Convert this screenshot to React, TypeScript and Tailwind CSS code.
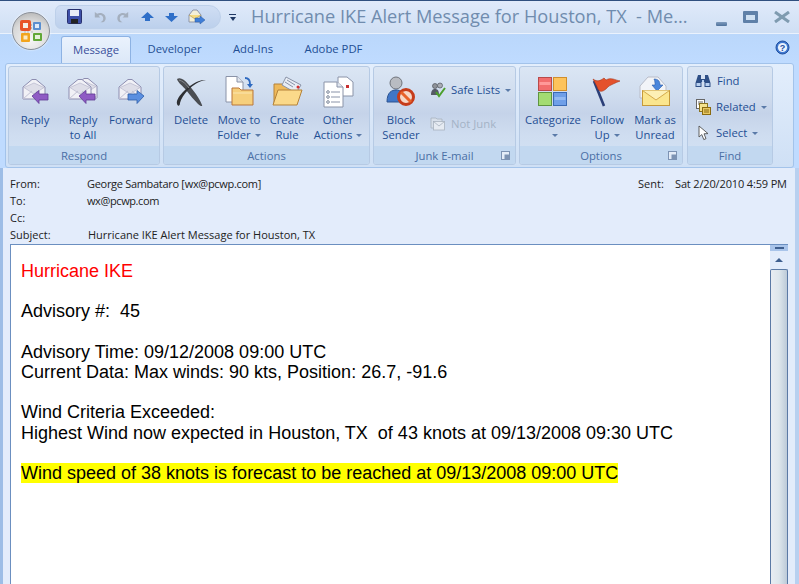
import React from "react";

const ui = { fontFamily: '"Open Sans", "Noto Sans", sans-serif' };

const Env = ({ x = 3, y = 2 }: { x?: number; y?: number }) => (
  <g transform={`translate(${x} ${y})`}>
    <path d="M1 9 L10 1.5 h4 L23 9 V21 H1 Z" fill="#f1f1f6" stroke="#8d8db0" />
    <path d="M2 9.5 L12 5 L22 9.5 L12 16 Z" fill="#dedee8" stroke="#b0b0c8" strokeWidth=".6" />
    <path d="M1 21 L10 13 M23 21 L14 13" stroke="#c2c2d4" fill="none" />
  </g>
);
const ArrowL = ({ c = "#8f5bc4", d = "#5f3b94" }: { c?: string; d?: string }) => (
  <path d="M13 20 L20 14.5 V18 H29 V24 H20 V27.5 Z" fill={c} stroke={d} strokeWidth=".8" />
);
const IconReply = () => (
  <svg width="32" height="32" viewBox="0 0 32 32"><Env /><ArrowL /></svg>
);
const IconReplyAll = () => (
  <svg width="32" height="32" viewBox="0 0 32 32">
    <g transform="translate(7 -1)"><Env x={0} y={2} /></g>
    <Env x={1} y={2} />
    <g transform="translate(-1 0)"><ArrowL /></g>
  </svg>
);
const IconForward = () => (
  <svg width="32" height="32" viewBox="0 0 32 32">
    <Env />
    <path d="M29 20 L22 14.5 V18 H13 V24 H22 V27.5 Z" fill="#5b8fe0" stroke="#2f5ea8" strokeWidth=".8" />
  </svg>
);
const IconDelete = () => (
  <svg width="32" height="32" viewBox="0 0 32 32">
    <path d="M2 3 C5 1 9 3 13 8 C18 14 24 21 27 29 C28 31 25 30 23 28 C19 24 15 19 11 14 C8 10 3 7 2 3 Z" fill="#4a4d52" />
    <path d="M31 4 C24 5 18 9 13 14 C9 18 6 23 5 27 C5 30 3 31 2 28 C1 24 5 19 9 15 C15 9 24 3 31 4 Z" fill="#2e3034" />
    <path d="M4 4 C8 5 11 8 14 12" stroke="#85888e" fill="none" />
  </svg>
);
const IconMove = () => (
  <svg width="32" height="32" viewBox="0 0 32 32" overflow="visible">
    <path d="M3 0.5 H14 L20 6 V26 H3 Z" fill="#fff" stroke="#8a93a8" />
    <path d="M14 0.5 V6 H20" fill="#dfe5ee" stroke="#8a93a8" />
    <path d="M22 2 C25 2 27 3 27 8" fill="none" stroke="#2f6ac0" strokeWidth="1.8" />
    <path d="M24 8 H30 L27 12 Z" fill="#2f6ac0" />
    <path d="M9 12 H16 L18 14 H30 V29 H9 Z" fill="#f6cf7c" stroke="#b9763a" />
    <path d="M10 17 H29" stroke="#fbe6b0" />
  </svg>
);
const IconRule = () => (
  <svg width="32" height="32" viewBox="0 0 32 32" overflow="visible">
    <path d="M3 8 H12 L14 10 H26 V28 H3 Z" fill="#eeb95a" stroke="#b58238" />
    <path d="M15 1 L30 9 L25 17 L11 9 Z" fill="#e8edf5" stroke="#8a93a8" />
    <circle cx="27" cy="11" r="1.5" fill="#d83030" />
    <path d="M16 4 L24 9 M14 6 L22 11" stroke="#8a93a8" />
    <path d="M7 14 H31 L26 29 H2 Z" fill="#fbd98a" stroke="#b58238" />
  </svg>
);
const IconOther = () => (
  <svg width="32" height="32" viewBox="0 0 32 32">
    <path d="M16 1 H25 L31 6 V20 H16 Z" fill="#fff" stroke="#8a93a8" />
    <rect x="24" y="9" width="3" height="3" fill="#c83030" />
    <path d="M2 6 H15 L21 11 V31 H2 Z" fill="#fff" stroke="#8a93a8" />
    <path d="M15 6 V11 H21" fill="#dfe5ee" stroke="#8a93a8" />
    <circle cx="6" cy="16" r="1.3" fill="none" stroke="#7a8598" />
    <circle cx="6" cy="21" r="1.3" fill="none" stroke="#7a8598" />
    <circle cx="6" cy="26" r="1.3" fill="none" stroke="#7a8598" />
    <path d="M9 16 H18 M9 21 H18 M9 26 H18" stroke="#8a93a8" />
  </svg>
);
const IconBlock = () => (
  <svg width="32" height="32" viewBox="0 0 32 32">
    <circle cx="11" cy="7" r="6" fill="#b9bcc2" stroke="#70747c" />
    <path d="M2 26 C2 16 7 14 11 14 C16 14 20 17 20 26 Z" fill="#3f76c8" stroke="#2c5390" />
    <circle cx="21" cy="21" r="7.5" fill="#f6d8c8" stroke="#c63c1a" strokeWidth="3" />
    <path d="M16 16 L26 26" stroke="#e8622a" strokeWidth="3" />
  </svg>
);
const IconSafe = () => (
  <svg width="16" height="16" viewBox="0 0 16 16">
    <circle cx="5" cy="4" r="2.5" fill="#8f939a" stroke="#50545c" strokeWidth=".7" />
    <circle cx="10" cy="3.5" r="2.5" fill="#a9adb4" stroke="#50545c" strokeWidth=".7" />
    <path d="M1 13 C1 8 3 7 5 7 C8 7 9 9 9 13 Z" fill="#555a66" />
    <path d="M6 10 L9 14 L15 6" fill="none" stroke="#4ca02c" strokeWidth="2" />
  </svg>
);
const IconNotJunk = () => (
  <svg width="16" height="16" viewBox="0 0 16 16">
    <path d="M1 2 H6 L7 3 H12 V12 H1 Z" fill="#d7dfea" stroke="#a8b2bf" strokeWidth=".8" />
    <rect x="3.5" y="5.5" width="11" height="8.5" fill="#e6ebf2" stroke="#a8b2bf" strokeWidth=".8" />
    <path d="M3.5 5.5 L9 10 L14.5 5.5" fill="none" stroke="#a8b2bf" strokeWidth=".8" />
  </svg>
);
const IconCategorize = () => (
  <svg width="30" height="30" viewBox="0 0 30 30">
    <rect x="0.5" y="0.5" width="13" height="13" fill="#f26d6d" stroke="#b84a4a" />
    <rect x="1.5" y="5" width="11" height="3" fill="#f99" />
    <rect x="15.5" y="0.5" width="13" height="13" fill="#fdc35c" stroke="#d08f2d" />
    <rect x="0.5" y="15.5" width="13" height="13" fill="#a3dc72" stroke="#5f9440" />
    <rect x="15.5" y="15.5" width="13" height="13" fill="#6f9fe8" stroke="#3a6ab4" />
    <rect x="16.5" y="20" width="11" height="3" fill="#93baf2" />
  </svg>
);
const IconFlag = () => (
  <svg width="32" height="32" viewBox="0 0 32 32">
    <path d="M3 5 L13 30" stroke="#2b3f78" strokeWidth="2.6" />
    <path d="M2 3 C6 6 9 5 13 2 L15 4 C20 1 24 4 29 5 C24 7 22 8 18 10 C14 14 10 18 7 13 C6 10 4 7 2 3 Z" fill="#e4512c" stroke="#a83618" strokeWidth=".6" />
  </svg>
);
const IconUnread = () => (
  <svg width="32" height="32" viewBox="0 0 32 32">
    <path d="M1 10 L9 1 H19 L27 10 V22 H1 Z" fill="#f2f4f8" stroke="#b8bcc8" />
    <path d="M15 3 C19 3 21 5 21 9 H24 L18 15 L13 9 H16 C16 7 16 5 15 3 Z" fill="#4a86dc" stroke="#2c5ca8" strokeWidth=".6" />
    <rect x="3.5" y="14.5" width="27" height="15" fill="#fbe68e" stroke="#c69a3a" />
    <path d="M3.5 14.5 L17 24 L30.5 14.5" fill="#fdf0b5" stroke="#d4aa4c" />
  </svg>
);
const IconBino = () => (
  <svg width="16" height="14" viewBox="0 0 16 14">
    <path d="M3 1 H6 V5 H10 V1 H13 L15.5 9 V13 H9.5 V8 H6.5 V13 H.5 V9 Z" fill="#2e4f86" />
    <rect x="1.5" y="9" width="4" height="3" fill="#b8d0f0" />
    <rect x="10.5" y="9" width="4" height="3" fill="#b8d0f0" />
    <rect x="7" y="6" width="2" height="2" fill="#b8d0f0" />
  </svg>
);
const IconRelated = () => (
  <svg width="16" height="16" viewBox="0 0 16 16">
    <rect x="1.5" y="0.5" width="8" height="9" fill="#fff" stroke="#666" />
    <path d="M3 3 H8 M3 5 H8" stroke="#666" />
    <rect x="4.5" y="4.5" width="8" height="8" fill="#f4e28e" stroke="#8a7320" />
    <rect x="7.5" y="8.5" width="8" height="7" fill="#e9c862" stroke="#8a6a10" />
    <path d="M9 11 H14 M9 13 H14" stroke="#8a6a10" />
  </svg>
);
const IconCursor = () => (
  <svg width="12" height="16" viewBox="0 0 12 16">
    <path d="M1 1 L1 12 L3.8 9.6 L5.8 14.6 L8 13.6 L6 8.8 L10 8.6 Z" fill="#fff" stroke="#505050" strokeWidth=".9" />
  </svg>
);
const Launcher = () => (
  <svg width="9" height="9" viewBox="0 0 9 9" className="absolute right-[5px] bottom-[4px]">
    <rect x=".5" y=".5" width="8" height="8" fill="#e4ecf7" stroke="#7d93b3" />
    <rect x="3.5" y="3.5" width="5" height="5" fill="#7d93b3" />
  </svg>
);
const Caret = ({ className = "" }: { className?: string }) => (
  <span className={`inline-block align-middle w-0 h-0 border-x-[3px] border-x-transparent border-t-[3px] border-t-[#5a7aa8] ${className}`} />
);

function Big({ icon, a, b, caret, w }: { icon: React.ReactNode; a: string; b?: string; caret?: boolean; w: string }) {
  return (
    <div className={`flex flex-col items-center shrink-0 ${w}`}>
      <div className="h-[32px] flex items-center justify-center">{icon}</div>
      <div className="mt-[4px] text-center leading-[15px] whitespace-nowrap">
        <div>{a}</div>
        {b !== undefined && (
          <div className="h-[15px]">
            {b}
            {caret && <Caret className="ml-[4px]" />}
          </div>
        )}
      </div>
    </div>
  );
}

function Group({ w, label, launcher, children }: { w: string; label: string; launcher?: boolean; children: React.ReactNode }) {
  return (
    <div className={`${w} shrink-0 relative flex flex-col rounded-[3px] border border-[#b6cae4] overflow-hidden bg-[linear-gradient(#dbe6f4_0%,#cfdcee_30%,#c5d3e9_48%,#cfddf0_70%,#d3e2f4_100%)]`}>
      <div className="flex-1 min-h-0">{children}</div>
      <div className="h-[18px] bg-[#c2d8f0] text-center leading-[19px] text-[#4a6fa5] relative">
        {label}
        {launcher && <Launcher />}
      </div>
    </div>
  );
}

export default function App() {
  return (
    <div style={ui} className="relative w-[799px] h-[584px] overflow-hidden flex flex-col text-[11.3px] bg-[#bfdbff] border-t border-t-[#2f4f7f]">
      {/* Office orb */}
      <div className="absolute z-10 left-[12px] top-[11px] w-[38px] h-[38px] rounded-full border border-[#8b9098] bg-[radial-gradient(circle_at_50%_75%,#f6f6f6,#d8d8d8_60%,#a8a8a8)] flex items-center justify-center shadow-[0_0_2px_#fff]">
        <svg width="24" height="24" viewBox="0 0 24 24">
          <rect x="1" y="1" width="11" height="11" rx="2" fill="#e8552a" />
          <rect x="4" y="4" width="5" height="5" fill="#f4f0e8" />
          <rect x="14" y="3" width="8" height="8" rx="1" fill="#5a8fd0" />
          <rect x="16" y="5" width="4" height="4" fill="#dfeaf8" />
          <rect x="2" y="14" width="9" height="9" rx="1" fill="#f2a51e" />
          <rect x="4.5" y="16.5" width="4" height="4" fill="#fbeac4" />
          <rect x="14" y="14" width="9" height="8" rx="1" fill="#62a838" />
          <rect x="16" y="16" width="5" height="4" fill="#e6f2da" />
          <path d="M12 6 h2 M12 9 h2 M6 12.5 v2 M9 12.5 v2 M12.5 13 h1" stroke="#8a8a8a" strokeWidth="1" strokeDasharray="1 1" />
        </svg>
      </div>

      {/* Title bar */}
      <div className="h-[33px] shrink-0 flex items-center bg-[linear-gradient(#e0eafa,#cfdff4)] border-b border-b-[#eaf2fd] pl-[55px] pr-[9px]">
        <div className="w-[166px] h-[24px] rounded-r-[12px] rounded-l-[6px] bg-[linear-gradient(#d0def4,#bcd0ec)] border border-[#bdd0ea] flex items-center pl-[11px] gap-[9px]">
          <svg width="16" height="16" viewBox="0 0 16 16"><rect x=".5" y=".5" width="14" height="14" rx="1" fill="#3d4fa8" stroke="#28306e" /><rect x="3" y="1" width="9" height="6" fill="#e8ecf6" /><rect x="4" y="10" width="7" height="4.5" fill="#222" /></svg>
          <svg width="15" height="15" viewBox="0 0 16 16"><path d="M3 2 V8 H9 L7 6 C9 4.5 12 6 12 9 C12 11 11 12 9 13 C13 14 15 11 14.5 8 C14 3.5 8.5 2 5.5 4 Z" fill="#a4afbe" /></svg>
          <svg width="15" height="15" viewBox="0 0 16 16"><path d="M13 2 V8 H7 L9 6 C7 4.5 4 6 4 9 C4 11 5 12 7 13 C3 14 1 11 1.5 8 C2 3.5 7.5 2 10.5 4 Z" fill="#a4afbe" /></svg>
          <svg width="15" height="10" viewBox="0 0 15 10"><path d="M7.5 0 L14 6 H10 V9 H5 V6 H1 Z" fill="#2f6fc8" /></svg>
          <svg width="15" height="10" viewBox="0 0 15 10"><path d="M7.5 10 L14 4 H10 V1 H5 V4 H1 Z" fill="#2f6fc8" /></svg>
          <svg width="18" height="16" viewBox="0 0 18 16"><path d="M1 6 L5 1 H9 L13 6 V13 H1 Z" fill="#f4f0d8" stroke="#8f95a8" /><path d="M1 6 L7 10 L13 6" fill="#f6dc80" stroke="#b09040" strokeWidth=".6" /><path d="M7 9 H12 V7 L17 11 L12 15 V13 H7 Z" fill="#3f7ed8" stroke="#2a5aa0" strokeWidth=".5" /></svg>
        </div>
        <div className="ml-[7px] w-[9px] flex flex-col items-center">
          <div className="w-[7px] h-px bg-[#1f3864]" />
          <div className="mt-[2px] w-0 h-0 border-x-[3.5px] border-x-transparent border-t-[4px] border-t-[#1f3864]" />
        </div>
        <div className="ml-[14px] text-[18.2px] text-[#708cae] whitespace-nowrap w-[462px]">Hurricane IKE Alert Message for Houston, TX&nbsp; - Me...</div>
        <div className="flex-1 flex items-center justify-end gap-[16px]">
          <div className="w-[11px] h-[4px] mt-[14px] bg-[linear-gradient(#7f9bbd,#4f729c)] rounded-[1px]" />
          <div className="w-[15px] h-[12px] border-[3px] border-[#5f80a8] border-t-[4px] bg-[#cfe0f2] rounded-[1px]" />
          <svg width="16" height="12" viewBox="0 0 16 12"><path d="M1 1 L15 11 M15 1 L1 11" stroke="#7f9bb0" strokeWidth="3" /></svg>
        </div>
      </div>

      {/* Tabs */}
      <div className="h-[29px] shrink-0 flex items-end pl-[61px] pr-[9px] text-[#1f4f94] bg-[linear-gradient(#bad7fb,#bfdbff)] relative">
        <div className="h-[27px] w-[70px] flex items-center justify-center bg-[linear-gradient(#eaf2fd,#dce8f8)] border border-b-0 border-[#8db2e3] rounded-t-[3px] text-[#3a4f9a]">Message</div>
        <div className="h-[27px] ml-[17px] w-[53px] flex items-center justify-center">Developer</div>
        <div className="h-[27px] ml-[31px] w-[42px] flex items-center justify-center">Add-Ins</div>
        <div className="h-[27px] ml-[30px] w-[59px] flex items-center justify-center">Adobe PDF</div>
        <svg width="15" height="15" viewBox="0 0 15 15" className="absolute right-[9px] top-[6px]">
          <circle cx="7.5" cy="7.5" r="6.5" fill="#3f78d0" stroke="#1f4f9f" />
          <circle cx="7.5" cy="7.5" r="4.6" fill="#eaf2fd" />
          <text x="7.5" y="11" textAnchor="middle" fontSize="9" fontWeight="700" fill="#1f4f9f" fontFamily="Liberation Sans">?</text>
        </svg>
      </div>

      {/* Ribbon */}
      <div className="h-[105px] shrink-0 mx-[5px] pl-[2px] pt-[2px] pb-[2px] flex gap-[3px] rounded-[3px] border border-[#a3c3ea] bg-[linear-gradient(#e3eefc,#cfe0f5)] text-[#1f4f94]">
        <Group w="w-[152px]" label="Respond">
          <div className="flex pl-[2px] pt-[9px]">
            <Big w="w-[48px]" icon={<IconReply />} a="Reply" />
            <Big w="w-[48px]" icon={<IconReplyAll />} a="Reply" b="to All" />
            <Big w="w-[48px]" icon={<IconForward />} a="Forward" />
          </div>
        </Group>
        <Group w="w-[207px]" label="Actions">
          <div className="flex pl-[4px] pt-[9px]">
            <Big w="w-[46px]" icon={<IconDelete />} a="Delete" />
            <Big w="w-[50px]" icon={<IconMove />} a="Move to" b="Folder" caret />
            <Big w="w-[46px]" icon={<IconRule />} a="Create" b="Rule" />
            <Big w="w-[56px]" icon={<IconOther />} a="Other" b="Actions" caret />
          </div>
        </Group>
        <Group w="w-[143px]" label="Junk E-mail" launcher>
          <div className="flex pl-[3px] pt-[9px]">
            <Big w="w-[48px]" icon={<IconBlock />} a="Block" b="Sender" />
            <div className="ml-[5px] flex flex-col">
              <div className="h-[16px] mt-[6px] flex items-center gap-[5px] whitespace-nowrap"><IconSafe />Safe Lists<Caret /></div>
              <div className="h-[16px] mt-[18px] flex items-center gap-[5px] whitespace-nowrap text-[#a4b3c6]"><IconNotJunk />Not Junk</div>
            </div>
          </div>
        </Group>
        <Group w="w-[164px]" label="Options" launcher>
          <div className="flex pl-[3px] pt-[9px]">
            <Big w="w-[60px]" icon={<IconCategorize />} a="Categorize" b="" caret />
            <Big w="w-[48px]" icon={<IconFlag />} a="Follow" b="Up" caret />
            <Big w="w-[48px]" icon={<IconUnread />} a="Mark as" b="Unread" />
          </div>
        </Group>
        <div className="ml-[1px]">
          <Group w="w-[86px] h-full" label="Find">
            <div className="flex flex-col pl-[7px] pt-[6px] gap-[10px]">
              <div className="h-[16px] flex items-center gap-[6px]"><IconBino />Find</div>
              <div className="h-[16px] flex items-center gap-[5px]"><IconRelated />Related<Caret /></div>
              <div className="h-[16px] flex items-center gap-[5px]"><span className="w-[16px] pl-[3px] flex"><IconCursor /></span>Select<Caret /></div>
            </div>
          </Group>
        </div>
      </div>

      {/* Message */}
      <div className="flex-1 min-h-0 flex flex-col text-[11px] bg-[#e3ecfb] border-l-[3px] border-l-[#9dbde6] border-r-[4px] border-r-[#b8d0f0] pl-[7px] pr-[7px] text-[#222]">
        <div className="h-[76px] pt-[7px] shrink-0 relative leading-[17px]">
          <div className="flex"><span className="w-[77px]">From:</span><span className="tracking-[-0.3px]">George Sambataro [wx@pcwp.com]</span></div>
          <div className="flex"><span className="w-[77px]">To:</span><span className="tracking-[-0.4px]">wx@pcwp.com</span></div>
          <div className="flex"><span className="w-[77px]">Cc:</span></div>
          <div className="flex"><span className="w-[78px]">Subject:</span><span>Hurricane IKE Alert Message for Houston, TX</span></div>
          <div className="absolute left-[628px] top-[7px] flex whitespace-nowrap"><span className="w-[37px]">Sent:</span><span className="tracking-[-0.15px]">Sat 2/20/2010 4:59 PM</span></div>
        </div>
        <div className="flex-1 min-h-0 flex bg-white border border-[#6b8fc0] border-b-0 border-r-0 overflow-hidden">
          <div className="flex-1 pl-[10px] pt-[16px] text-[18px] leading-[20.33px] text-black" style={{ fontFamily: '"Liberation Sans", Arial, sans-serif' }}>
            <div className="text-[#ff0000]">Hurricane IKE</div>
            <div className="mt-[20px] whitespace-pre">Advisory #:  45</div>
            <div className="mt-[20px]">Advisory Time: 09/12/2008 09:00 UTC</div>
            <div>Current Data: Max winds: 90 kts, Position: 26.7, -91.6</div>
            <div className="mt-[20px]">Wind Criteria Exceeded:</div>
            <div className="whitespace-pre">Highest Wind now expected in Houston, TX  of 43 knots at 09/13/2008 09:30 UTC</div>
            <div className="mt-[20px]"><span className="bg-[#ffff00]">Wind speed of 38 knots is forecast to be reached at 09/13/2008 09:00 UTC</span></div>
          </div>
          <div className="w-[18px] shrink-0 flex flex-col bg-[#e3ecfb]">
            <div className="h-[6px] bg-[#a9c4ea] flex items-center justify-center"><div className="w-[9px] h-[2px] bg-[#3f5f8f]" /></div>
            <div className="h-[18px] flex items-center justify-center">
              <div className="w-0 h-0 border-x-[4px] border-x-transparent border-b-[4px] border-b-[#3f5f8f]" />
            </div>
            <div className="flex-1 rounded-t-[2px] border border-b-0 border-[#5b7aa5] bg-[linear-gradient(90deg,#e8edf2,#dde6ec_50%,#bccad8)]" />
          </div>
        </div>
      </div>
    </div>
  );
}
